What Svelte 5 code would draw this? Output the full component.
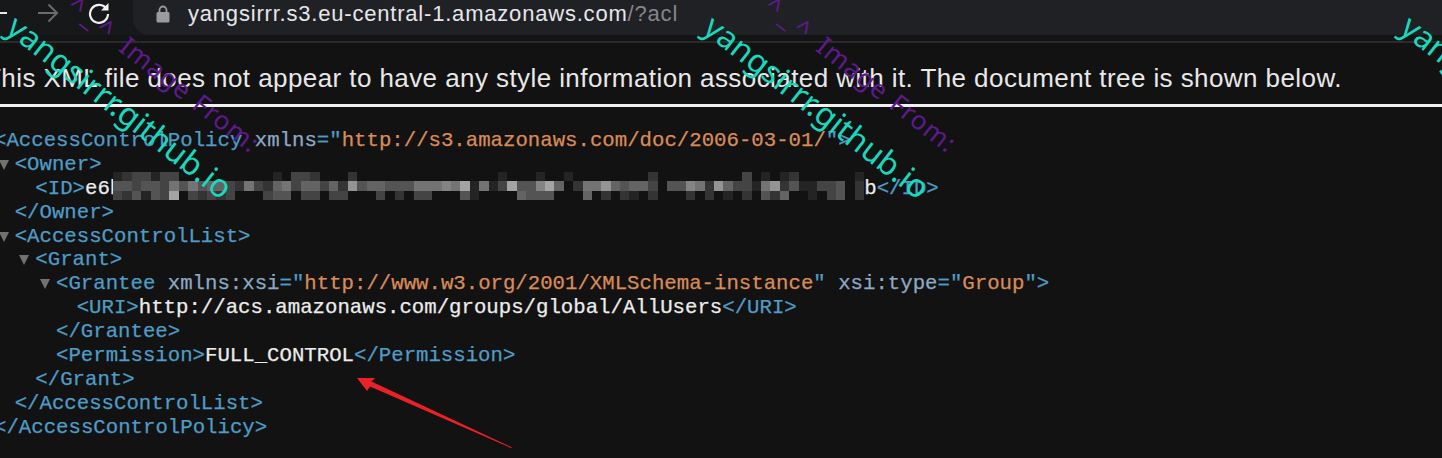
<script>
  // mosaic over the owner id: one digit per cell, 0 = no cell
  const mosaic = [
    '12331330000000000103320002000000000000000100010010000000020000000003010120000001',
    '44344364645532632563553528455444666769161394479502668545530447628533168241133402',
    '32414390323230003440330330003020330004100005444000502021020002020102042500103402'
  ];

  const cells = [];
  mosaic.forEach((row, r) => {
    [...row].forEach((d, c) => {
      if (d !== '0') cells.push({ r, c, gray: 20 + Number(d) * 16 });
    });
  });

  const marks = [0, 697, 1394];
</script>

<div class="page">
  <header class="toolbar">
    <div class="nav">
      <span class="back"></span>
      <svg class="forward" width="22" height="20" viewBox="0 0 22 20">
        <path d="M1 10H20M11.500 1.500L20 10L11.500 18.500" fill="none" stroke="#6a6b6d" stroke-width="2" />
      </svg>
      <svg class="reload" width="24" height="24" viewBox="0 0 24 24">
        <path d="M19.600 8A9 9 0 1 0 21 13" fill="none" stroke="#f2f2f2" stroke-width="2.200" />
        <path d="M21.500 2V9.500H14Z" fill="#f2f2f2" />
      </svg>
    </div>
    <div class="omnibox">
      <svg class="lock" width="14" height="18" viewBox="0 0 14 18">
        <path d="M3.500 8V5A3.500 3.500 0 0 1 10.500 5V8" fill="none" stroke="#9a9b9e" stroke-width="1.800" />
        <rect x="0.500" y="7" width="13" height="10.500" rx="1.500" fill="#9a9b9e" />
      </svg>
      <span class="url">yangsirrr.s3.eu-central-1.amazonaws.com<span class="query">/?acl</span></span>
    </div>
  </header>
  <div class="strip"></div>

  <div class="notice">
    <p>This XML file does not appear to have any style information associated with it. The document tree is shown below.</p>
  </div>

  <main class="tree">
    <div class="line"><span class="tag">&lt;AccessControlPolicy</span> <span class="attr">xmlns</span><span class="tag">="</span><span class="val">http://s3.amazonaws.com/doc/2006-03-01/</span><span class="tag">"&gt;</span></div>
    <div class="line lv1"><i class="caret"></i><span class="tag">&lt;Owner&gt;</span></div>
    <div class="line lv2"><span class="tag">&lt;ID&gt;</span><span class="text">e6b</span><span class="gap"></span><span class="text">b</span><span class="tag">&lt;/ID&gt;</span></div>
    <div class="line lv1"><span class="tag">&lt;/Owner&gt;</span></div>
    <div class="line lv1"><i class="caret"></i><span class="tag">&lt;AccessControlList&gt;</span></div>
    <div class="line lv2"><i class="caret"></i><span class="tag">&lt;Grant&gt;</span></div>
    <div class="line lv3"><i class="caret"></i><span class="tag">&lt;Grantee</span> <span class="attr">xmlns:xsi</span><span class="tag">="</span><span class="val">http://www.w3.org/2001/XMLSchema-instance</span><span class="tag">"</span> <span class="attr">xsi:type</span><span class="tag">="</span><span class="val">Group</span><span class="tag">"&gt;</span></div>
    <div class="line lv4"><span class="tag">&lt;URI&gt;</span><span class="text">http://acs.amazonaws.com/groups/global/AllUsers</span><span class="tag">&lt;/URI&gt;</span></div>
    <div class="line lv3"><span class="tag">&lt;/Grantee&gt;</span></div>
    <div class="line lv3"><span class="tag">&lt;Permission&gt;</span><span class="text">FULL_CONTROL</span><span class="tag">&lt;/Permission&gt;</span></div>
    <div class="line lv2"><span class="tag">&lt;/Grant&gt;</span></div>
    <div class="line lv1"><span class="tag">&lt;/AccessControlList&gt;</span></div>
    <div class="line"><span class="tag">&lt;/AccessControlPolicy&gt;</span></div>
  </main>

  <div class="mosaic">
    {#each cells as cell}
      <span class="cell" style="grid-row: {cell.r + 1}; grid-column: {cell.c + 1}; background: rgb({cell.gray},{cell.gray},{cell.gray})"></span>
    {/each}
  </div>

  <svg class="pointer" width="1442" height="458" viewBox="0 0 1442 458">
    <path d="M357 378L375 378L371.500 381.500L512 447.500L511 448L370 386.500L367 391Z" fill="#ea2127" />
  </svg>

  {#each marks as x}
    <span class="mark purple" style="left: {x + 82}px"><span class="face">^_^</span> Image From:</span>
    <span class="mark cyan" style="left: {x + 24}px">yangsirrr.github.io</span>
  {/each}
</div>

<style>
  :global(body) {
    margin: 0;
    background: #121212;
  }

  .page {
    position: relative;
    width: 1442px;
    height: 458px;
    overflow: hidden;
    background: #121212;
    font-family: "Liberation Sans", Arial, sans-serif;
  }

  .toolbar {
    display: flex;
    height: 35px;
    background: #17181a;
  }

  .nav {
    display: flex;
    align-items: center;
    width: 133px;
    flex-shrink: 0;
    padding-bottom: 9px;
    box-sizing: border-box;
  }

  .back {
    width: 7px;
    height: 2px;
    background: #e8e8e8;
    margin-right: 30px;
  }

  .forward {
    margin-right: 28px;
  }

  .omnibox {
    flex: 1;
    display: flex;
    align-items: center;
    background: #202125;
    border-bottom-left-radius: 16px;
    padding: 0 0 8px 23px;
  }

  .lock {
    margin-right: 18px;
  }

  .url {
    font-size: 22px;
    letter-spacing: 0.800px;
    color: #e6e7ea;
    white-space: nowrap;
  }

  .query {
    color: #85868a;
  }

  .strip {
    height: 6px;
    background: #141416;
    border-bottom: 2px solid #2a2a2a;
  }

  .notice {
    height: 61px;
    border-bottom: 3px solid #f0f0f0;
    overflow: hidden;
  }

  .notice p {
    margin: 21px 0 0 -15px;
    font-size: 26px;
    letter-spacing: 0.420px;
    line-height: 28px;
    color: #e8e8e8;
    white-space: nowrap;
  }

  .tree {
    padding-top: 22px;
    margin-left: -6px;
    font-family: "Liberation Mono", monospace;
    font-size: 20.700px;
    -webkit-text-stroke: 0.250px currentColor;
  }

  .line {
    height: 23.900px;
    line-height: 23.900px;
    white-space: pre;
  }

  .lv1 { padding-left: 20.670px; }
  .lv2 { padding-left: 41.340px; }
  .lv3 { padding-left: 62px; }
  .lv4 { padding-left: 82.680px; }

  .tag { color: #4f9cc7; }
  .attr { color: #8da9c6; }
  .val { color: #d98b58; }
  .text { color: #ececec; }

  .gap {
    display: inline-block;
    width: 742px;
  }

  .caret {
    display: inline-block;
    width: 0;
    height: 0;
    margin-left: -16px;
    margin-right: 6px;
    border-left: 5px solid transparent;
    border-right: 5px solid transparent;
    border-top: 10px solid #727272;
  }

  .mosaic {
    position: absolute;
    left: 113px;
    top: 172px;
    display: grid;
    grid-template-columns: repeat(80, 9.400px);
    grid-template-rows: repeat(3, 9.400px);
  }

  .pointer {
    position: absolute;
    left: 0;
    top: 0;
  }

  .mark {
    position: absolute;
    white-space: nowrap;
    font-family: "Noto Sans", sans-serif;
    transform-origin: 0 0;
    transform: rotate(38deg);
  }

  .cyan {
    top: 6px;
    color: #17d9bd;
    font-size: 32px;
    line-height: 40px;
  }

  .purple {
    top: -12px;
    color: #5e1a8c;
    font-size: 26px;
    line-height: 34px;
    word-spacing: 2px;
    letter-spacing: 1px;
  }

  .face {
    letter-spacing: 5px;
  }
</style>
